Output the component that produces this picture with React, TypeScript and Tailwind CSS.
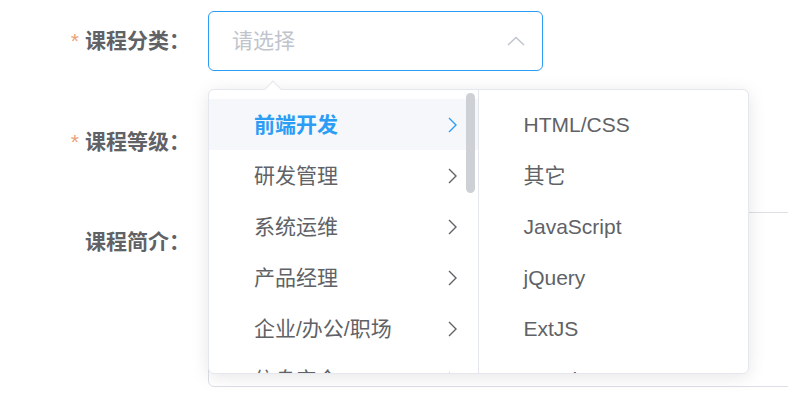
import React from "react";

const BLUE = "#2b9df5";

function ChevronRight({ color }: { color: string }) {
  return (
    <svg width="9" height="16" viewBox="0 0 9 16" fill="none">
      <polyline points="1,1 8,8 1,15" stroke={color} strokeWidth="1.4" fill="none" />
    </svg>
  );
}

function ChevronUp() {
  return (
    <svg width="18" height="10" viewBox="0 0 18 10" fill="none">
      <polyline points="1,9 9,1.5 17,9" stroke="#c0c4cc" strokeWidth="1.5" fill="none" />
    </svg>
  );
}

const left = ["前端开发", "研发管理", "系统运维", "产品经理", "企业/办公/职场", "信息安全"];
const right = ["HTML/CSS", "其它", "JavaScript", "jQuery", "ExtJS", "AngularJS"];

function Label({ text, required }: { text: string; required?: boolean }) {
  return (
    <div className="w-[208px] shrink-0 pr-[18px] text-right leading-[60px] text-[21px] font-bold text-[#606266]">
      {required && <span className="mr-[6px] font-normal text-[#ea9f78]">*</span>}
      {text}
    </div>
  );
}

export default function App() {
  return (
    <div className="relative w-[788px] h-[398px] overflow-hidden bg-white font-['Liberation_Sans','Noto_Sans_CJK_SC',sans-serif]">
      <div className="flex flex-col pt-[11px]">
        <div className="flex">
          <Label text="课程分类：" required />
          <div className="flex h-[60px] w-[335px] items-center justify-between rounded-[6px] border border-[#2b9df5] pl-[23px] pr-[17px]">
            <span className="text-[21px] text-[#c0c4cc]">请选择</span>
            <ChevronUp />
          </div>
        </div>
        <div className="mt-[41px] flex">
          <Label text="课程等级：" required />
          <div className="h-[60px] w-[335px] rounded-[6px] border border-[#dcdfe6]" />
        </div>
        <div className="mt-[40px] flex">
          <Label text="课程简介：" />
          <div className="h-[175px] w-[620px] shrink-0 rounded-[6px] border border-[#dcdfe6]" />
        </div>
      </div>

      {/* Cascader dropdown */}
      <div className="absolute left-[208px] top-[89px] h-[285px] w-[541px] rounded-[6px] border border-[#e4e7ed] bg-white shadow-[0_3px_18px_rgba(0,0,0,0.1)]">
        <div className="absolute left-[58px] top-[-7px] h-[12px] w-[12px] rotate-45 border-l border-t border-[#e4e7ed] bg-white" />
        <div className="relative flex h-full overflow-hidden rounded-[6px]">
          <div className="relative h-full w-[270px] border-r border-[#e4e7ed] pt-[9px]">
            {left.map((t, i) => (
              <div
                key={t}
                className={
                  i === 0
                    ? "flex h-[51px] items-center justify-between bg-[#f5f7fa] pl-[45px] pr-[21px] text-[21px] font-bold"
                    : "flex h-[51px] items-center justify-between pl-[45px] pr-[21px] text-[21px] text-[#606266]"
                }
              >
                <span style={i === 0 ? { color: BLUE } : undefined}>{t}</span>
                <ChevronRight color={i === 0 ? BLUE : "#606266"} />
              </div>
            ))}
            <div className="absolute right-[3px] top-[3px] h-[100px] w-[9px] rounded-full bg-[#cdd1d6]" />
          </div>
          <div className="h-full w-[270px] pt-[9px]">
            {right.map((t) => (
              <div key={t} className="flex h-[51px] items-center pl-[45px] text-[21px] text-[#606266]">
                {t}
              </div>
            ))}
          </div>
        </div>
      </div>
    </div>
  );
}
